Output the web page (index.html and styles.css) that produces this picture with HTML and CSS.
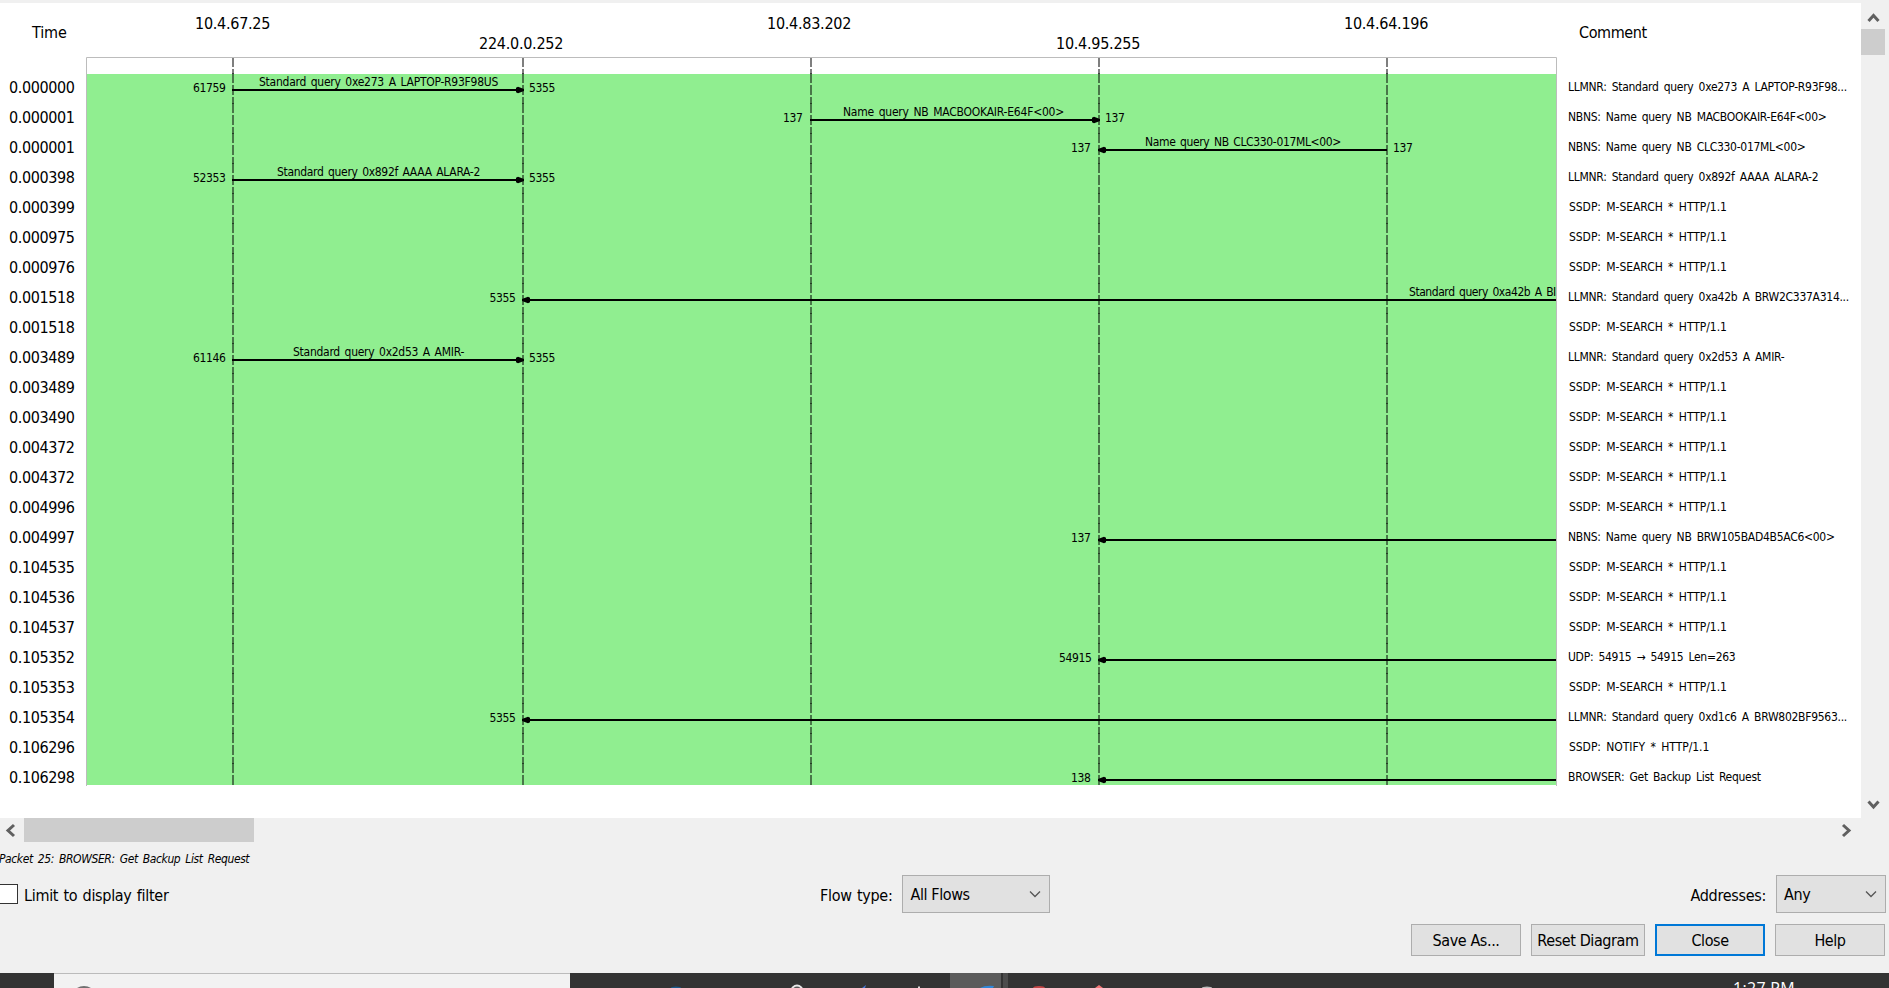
FILE: index.html
```
<!DOCTYPE html>
<html lang="en">
<head>
<meta charset="utf-8">
<title>Flow</title>
<link rel="stylesheet" href="styles.css">
</head>
<body>
<main class="dialog">
  <section class="view">
    <div class="sheet">
      <div class="times"><div class="times-head">Time</div><div id="times"></div></div>
      <div class="chart"><svg id="chart" width="1472" height="815" viewBox="86 3 1472 815"></svg></div>
      <div class="comments"><div class="comments-head">Comment</div><div id="comments"></div></div>
    </div>
    <div class="vbar">
      <svg class="varrow" width="28" height="26" viewBox="0 0 28 26"><path d="M7.500 18 12.500 12.500l5 5.500" class="arrow"/></svg>
      <div class="vthumb"></div>
      <svg class="varrow" width="28" height="28" viewBox="0 0 28 28"><path d="M7.500 11.500 12.500 17l5-5.500" class="arrow"/></svg>
    </div>
  </section>
  <div class="hbar">
    <svg width="24" height="24" viewBox="0 0 24 24"><path d="M14 7 8 12.500l6 5.500" class="arrow"/></svg>
    <div class="hthumb"></div>
    <svg class="hright" width="24" height="24" viewBox="0 0 24 24"><path d="M8 7l6 5.500L8 18" class="arrow"/></svg>
  </div>
  <div class="hint">Packet 25: BROWSER: Get Backup List Request</div>
  <div class="options">
    <label class="check"><span class="box"></span><span class="label">Limit to display filter</span></label>
    <div class="field flow"><span class="label">Flow type:</span><div class="combo wide"><span>All Flows</span><svg width="12" height="8" viewBox="0 0 12 8"><path d="M1 1.500l5 5 5-5" class="chev"/></svg></div></div>
    <div class="field"><span class="label addr">Addresses:</span><div class="combo"><span>Any</span><svg width="12" height="8" viewBox="0 0 12 8"><path d="M1 1.500l5 5 5-5" class="chev"/></svg></div></div>
  </div>
  <div class="buttons">
    <button class="btn">Save As...</button>
    <button class="btn reset">Reset Diagram</button>
    <button class="btn primary">Close</button>
    <button class="btn">Help</button>
  </div>
</main>
<footer class="taskbar">
  <div class="search"><svg width="60" height="14" viewBox="0 0 60 14"><circle cx="30" cy="25" r="12" fill="none" stroke="#707070" stroke-width="2"/></svg></div>
  <div class="apps"><svg width="1160" height="15" viewBox="570 973 1160 15">
    <rect x="950" y="973" width="51" height="15" fill="#5b5b5b"/><rect x="1003" y="973" width="5" height="15" fill="#4c4c4c"/>
    <ellipse cx="676" cy="988" rx="5" ry="1.500" fill="#19588a"/>
    <circle cx="797" cy="991" r="5.500" fill="#555" stroke="#e8e8e8" stroke-width="2"/>
    <path d="M862 988l4-3-1 3z" fill="#4677d8"/><path d="M918 988v-1.500h2v1.500z" fill="#ddd"/>
    <path d="M980 988q5-3 14-2l-1 2z" fill="#2f86d8"/><ellipse cx="1039" cy="988" rx="6" ry="2" fill="#c44545"/>
    <path d="M1095 988l4-3 4 3z" fill="#f47777"/><ellipse cx="1207" cy="988" rx="5" ry="1.500" fill="#bbb"/>
  </svg></div>
  <div class="clock">1:27 PM</div>
</footer>
<script src="app.js"></script>
</body>
</html>
```
FILE: styles.css
```
* { box-sizing: border-box; }
body { margin: 0; width: 1889px; height: 988px; overflow: hidden; display: flex; flex-direction: column; background: #f0f0f0; color: #000; font-family: "DejaVu Sans Condensed", "DejaVu Sans", sans-serif; font-stretch: condensed; font-size: 16px; letter-spacing: -0.4px; }
.dialog { height: 973px; padding-top: 3px; display: flex; flex-direction: column; }
.view { display: flex; height: 815px; }
.sheet { display: flex; width: 1861px; background: #fff; }
.times { width: 86px; }
.times-head { height: 70px; padding: 20px 0 0 32px; line-height: 20px; letter-spacing: -0.1px; }
.time { height: 30px; line-height: 30px; padding-left: 9px; white-space: nowrap; }
.chart { width: 1472px; }
.chart svg { display: block; }
.comments { width: 303px; padding-left: 10px; }
.comments-head { height: 69px; padding: 20px 0 0 11px; line-height: 20px; }
.comment { height: 30px; line-height: 30px; font-size: 12px; letter-spacing: -0.28px; word-spacing: 2px; white-space: nowrap; }
.comment.ssdp { padding-left: 1px; letter-spacing: -0.05px; }
.vbar { width: 28px; display: flex; flex-direction: column; }
.vthumb { width: 24px; height: 26px; background: #cdcdcd; }
.varrow { display: block; flex: none; }
.varrow:last-child { margin-top: auto; }
.arrow { fill: none; stroke: #606060; stroke-width: 3; }
.hbar { display: flex; height: 24px; flex: none; }
.hthumb { width: 230px; background: #cdcdcd; }
.hright { margin-left: auto; margin-right: 30px; }
.hint { height: 33px; line-height: 34px; font-size: 12px; font-style: italic; word-spacing: 2px; text-indent: -1px; white-space: nowrap; }
.options { display: flex; height: 38px; align-items: center; }
.label { position: relative; top: 1px; letter-spacing: -0.3px; word-spacing: 1px; }
.check { width: 820px; display: flex; align-items: center; gap: 6px; }
.box { width: 18px; height: 20px; border: 1px solid #333; border-left: 0; background: #fff; }
.field { display: flex; align-items: center; gap: 10px; margin-left: auto; margin-right: 3px; }
.field.flow { margin: 0; }
.combo { width: 110px; height: 38px; display: flex; justify-content: space-between; align-items: center; padding: 0 8px 0 7px; border: 1px solid #adadad; background: #e1e1e1; }
.combo.wide { width: 148px; }
.chev { fill: none; stroke: #555; stroke-width: 1.3; }
.buttons { display: flex; justify-content: flex-end; gap: 10px; padding: 11px 4px 0 0; }
.btn { width: 110px; height: 32px; padding: 0; border: 1px solid #adadad; border-radius: 0; background: #e1e1e1; font: inherit; letter-spacing: inherit; white-space: nowrap; }
.reset { width: 114px; }
.primary { border: 2px solid #0078d7; }
.taskbar { height: 15px; display: flex; background: #333; overflow: hidden; padding-left: 54px; flex: none; }
.search { width: 516px; border-top: 1px solid #bbb; background: #f2f2f2; }
.search svg, .apps svg { display: block; }
.apps { width: 1163px; }
.clock { color: #fff; font: 16px/18px "Open Sans", sans-serif; padding-top: 6px; letter-spacing: 0.3px; white-space: nowrap; }
.lane { stroke: rgba(0,0,0,.5); stroke-width: 2; }
.flow-line { stroke: #000; stroke-width: 2; }
.small { font-size: 12px; letter-spacing: -0.3px; word-spacing: 1.5px; }
```
FILE: app.js
```
const M = 'SSDP: M-SEARCH * HTTP/1.1';
const rows = [
  ['0.000000', 'LLMNR: Standard query 0xe273 A LAPTOP-R93F98...'],
  ['0.000001', 'NBNS: Name query NB MACBOOKAIR-E64F<00>'],
  ['0.000001', 'NBNS: Name query NB CLC330-017ML<00>'],
  ['0.000398', 'LLMNR: Standard query 0x892f AAAA ALARA-2'],
  ['0.000399', M], ['0.000975', M], ['0.000976', M],
  ['0.001518', 'LLMNR: Standard query 0xa42b A BRW2C337A314...'],
  ['0.001518', M],
  ['0.003489', 'LLMNR: Standard query 0x2d53 A AMIR-'],
  ['0.003489', M], ['0.003490', M], ['0.004372', M], ['0.004372', M], ['0.004996', M],
  ['0.004997', 'NBNS: Name query NB BRW105BAD4B5AC6<00>'],
  ['0.104535', M], ['0.104536', M], ['0.104537', M],
  ['0.105352', 'UDP: 54915 → 54915 Len=263'],
  ['0.105353', M],
  ['0.105354', 'LLMNR: Standard query 0xd1c6 A BRW802BF9563...'],
  ['0.106296', 'SSDP: NOTIFY * HTTP/1.1'],
  ['0.106298', 'BROWSER: Get Backup List Request']
];
const esc = s => s.replace(/</g, '&lt;').replace(/>/g, '&gt;');
document.getElementById('times').innerHTML = rows.map(r => `<div class="time">${r[0]}</div>`).join('');
document.getElementById('comments').innerHTML = rows.map(r => `<div class="comment${r[1].startsWith('SSDP') ? ' ssdp' : ''}">${esc(r[1])}</div>`).join('');

const lanes = [233, 523, 811, 1099, 1387];
const text = (x, y, s, w, cls) => `<text x="${x}" y="${y}" textLength="${w}" class="${cls}">${esc(s)}</text>`;
let out = '<rect x="86" y="74" width="1470" height="711" fill="#90ee90"/><path d="M86.500 786V57.500H1556.500V786" fill="none" stroke="#bcbcbc"/>';
lanes.forEach(x => {
  out += `<path class="lane" d="M${x} 58v9"/><path class="lane" d="M${x} 69V785" stroke-dasharray="16 2 10 2" stroke-dashoffset="2"/>`;
  for (let y = 73; y < 785; y += 30) out += `<path class="lane" d="M${x} ${y}v1"/>`;
});
[['10.4.67.25', 195, 29, 75], ['224.0.0.252', 479, 49, 84], ['10.4.83.202', 767, 29, 84], ['10.4.95.255', 1056, 49, 84], ['10.4.64.196', 1344, 29, 84]]
  .forEach(([s, x, y, w]) => out += text(x, y, s, w, ''));
[[0, 233, 523, '61759', '5355', 'Standard query 0xe273 A LAPTOP-R93F98US', 259, 239],
 [1, 811, 1099, '137', '137', 'Name query NB MACBOOKAIR-E64F<00>', 843, 221],
 [2, 1387, 1099, '137', '137', 'Name query NB CLC330-017ML<00>', 1145, 196],
 [3, 233, 523, '52353', '5355', 'Standard query 0x892f AAAA ALARA-2', 277, 203],
 [7, 1556, 523, '', '5355', 'Standard query 0xa42b A BI', 1409, 147],
 [9, 233, 523, '61146', '5355', 'Standard query 0x2d53 A AMIR-', 293, 171],
 [15, 1556, 1099, '', '137'], [19, 1556, 1099, '', '54915'], [21, 1556, 523, '', '5355'], [23, 1556, 1099, '', '138']
].forEach(([i, a, b, p, q, label, lx, lw]) => {
  const y = 90 + i * 30, right = b > a;
  out += `<path class="flow-line" d="M${right ? a - 1 : a} ${y}H${b}"/>`;
  out += right
    ? `<path d="M${b + 1} ${y - 1}l-4-1.500-2-.8-2 1v4.600l2 1 2-.8 4-1.500z"/>`
    : `<path d="M${b - 1} ${y - 1}l4-1.500 2-.8 2 1v4.600l-2 1-2-.8-4-1.500z"/>`;
  const port = (s, x, left) => { const w = s.length * 6.5; return s ? text(left ? x - (s.length === 3 ? 8.500 : 7.500) - w : x + 6, y + 2, s, w, 'small') : ''; };
  out += port(p, a, right) + port(q, b, !right);
  if (label) out += text(lx, y - 4, label, lw, 'small');
});
document.getElementById('chart').innerHTML = out;
```
